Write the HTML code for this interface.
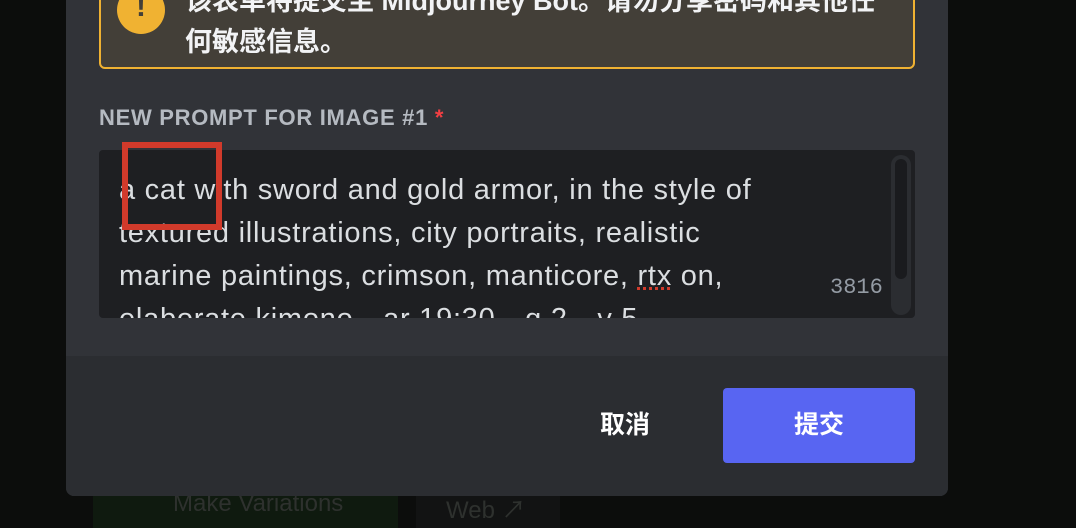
<!DOCTYPE html>
<html><head><meta charset="utf-8"><style>
*{margin:0;padding:0;box-sizing:border-box}
body{width:1076px;height:520px;background:#0c0d0c;position:relative;overflow:hidden;font-family:"Liberation Sans","Noto Sans CJK SC",sans-serif}
.bg1{position:absolute;left:93px;top:488px;width:305px;height:40px;background:#0f1a0f;color:#2e312e;font-size:24px;padding:2px 0 0 80px}
.bg2{position:absolute;left:416px;top:488px;width:144px;height:40px;background:#121313;color:#2e312e;font-size:24px;padding:2px 0 0 30px}
.modal{position:absolute;left:66px;top:-20px;width:882px;height:516px;background:#313338;border-radius:8px;overflow:hidden}
.footer{position:absolute;left:0;top:376px;width:882px;height:140px;background:#2b2d31}
.warn{position:absolute;left:33px;top:0;width:816px;height:89px;background:#433f38;border:2px solid #f0b232;border-radius:6px;overflow:hidden}
.warn .ic{position:absolute;left:16px;top:4px;width:48px;height:48px;border-radius:50%;background:#f0b232;color:#433f38;font-weight:bold;font-size:30px;text-align:center;line-height:42px}
.warn .t{position:absolute;left:84px;top:-1px;color:#f2f3f5;font-size:27px;font-weight:bold;line-height:41px;white-space:nowrap}
.lbl{position:absolute;left:33px;top:125px;color:#b5bac1;font-size:22px;font-weight:bold;letter-spacing:0.7px}
.lbl span{color:#f23f43}
.ta{position:absolute;left:33px;top:170px;width:816px;height:168px;background:#1e1f22;border-radius:4px;overflow:hidden}
.ta .tx{position:absolute;left:20px;top:19px;width:760px;color:#dbdee1;font-size:29px;letter-spacing:0.75px;line-height:43px;white-space:nowrap}
.sb{position:absolute;left:792px;top:5px;width:20px;height:160px;border-radius:10px;background:#2b2d31}
.sb i{position:absolute;left:4px;top:4px;width:12px;height:120px;border-radius:6px;background:#1a1b1e}
.cnt{position:absolute;left:731px;top:125px;color:#949ba4;font-family:"Liberation Mono",monospace;font-size:22px}
.sub{position:absolute;left:657px;top:408px;width:192px;height:75px;background:#5865f2;border-radius:4px;color:#fff;font-size:25px;font-weight:bold;text-align:center;line-height:75px}
.can{position:absolute;left:534px;top:408px;color:#fff;font-size:25px;font-weight:bold;line-height:75px}
.red{position:absolute;left:122px;top:142px;width:100px;height:88px;border:6px solid #d13a2b}
</style></head><body>
<div class="bg1">Make Variations</div><div class="bg2">Web ↗</div>
<div class="modal">
<div class="warn"><div class="ic">!</div><div class="t">该表单将提交至 Midjourney Bot。请勿分享密码和其他任<br>何敏感信息。</div></div>
<div class="lbl">NEW PROMPT FOR IMAGE #1 <span>*</span></div>
<div class="ta"><div class="tx">a cat with sword and gold armor, in the style of<br>textured illustrations, city portraits, realistic<br>marine paintings, crimson, manticore, <u style="text-decoration:underline dotted #d13a2b 3px">rtx</u> on,<br>elaborate kimono --ar 19:30 --q 2 --v 5</div>
<div class="sb"><i></i></div><div class="cnt">3816</div></div>
<div class="footer"></div>
<div class="can">取消</div>
<div class="sub">提交</div>
</div>
<div class="red"></div>
</body></html>
